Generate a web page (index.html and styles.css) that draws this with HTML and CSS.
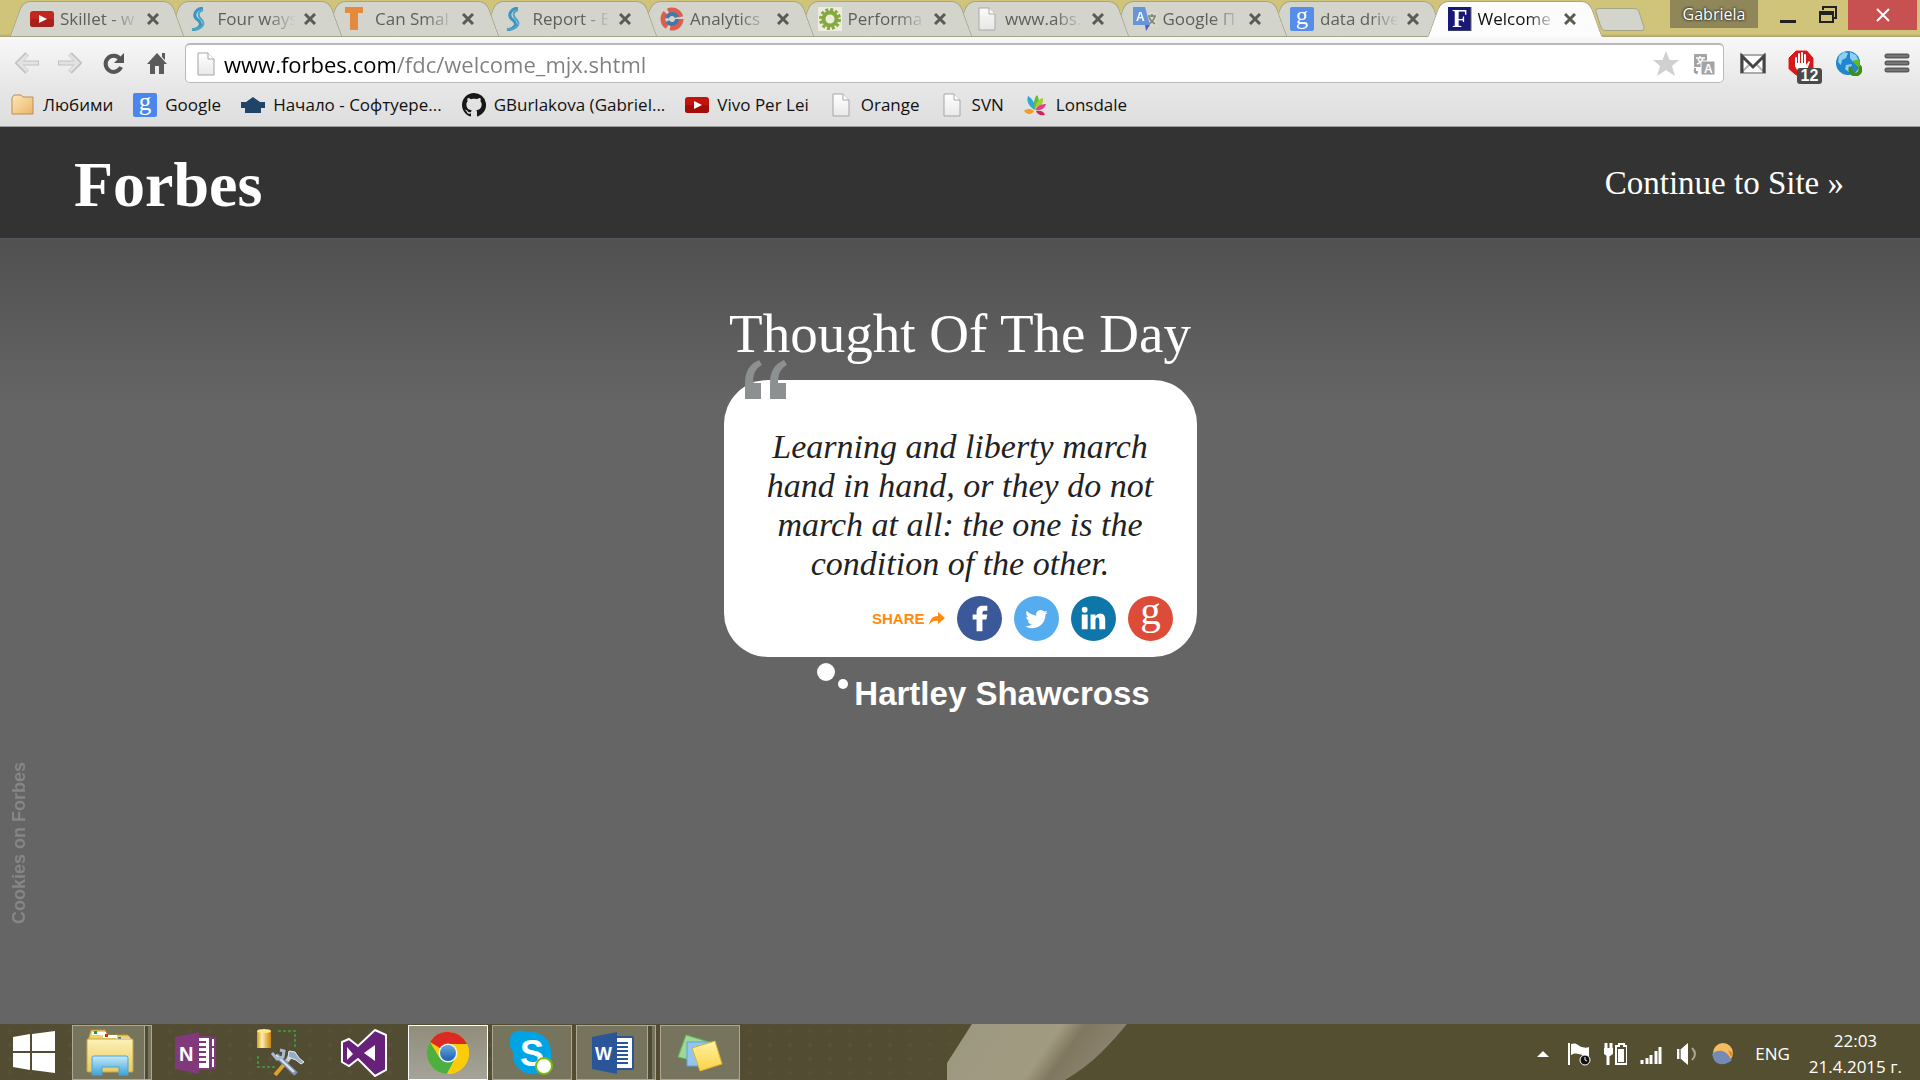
FILE: index.html
```html
<!DOCTYPE html>
<html lang="en">
<head>
<meta charset="utf-8">
<title>Welcome</title>
<link rel="stylesheet" href="styles.css">
</head>
<body>
<svg class="defs" aria-hidden="true">
  <defs>
    <linearGradient id="paper" x1="0" y1="0" x2="0" y2="1"><stop offset="0" stop-color="#fff"/><stop offset="1" stop-color="#e9e9e9"/></linearGradient>
    <linearGradient id="folder" x1="0" y1="0" x2="1" y2="1"><stop offset="0" stop-color="#fde8bd"/><stop offset="1" stop-color="#eab566"/></linearGradient>
    <linearGradient id="files" x1="0" y1="0" x2="0" y2="1"><stop offset="0" stop-color="#fdf1b5"/><stop offset="1" stop-color="#e9ca62"/></linearGradient>
    <linearGradient id="tray" x1="0" y1="0" x2="0" y2="1"><stop offset="0" stop-color="#c5eafa"/><stop offset="1" stop-color="#3fa4d8"/></linearGradient>
    <linearGradient id="gold" x1="0" y1="0" x2="1" y2="0"><stop offset="0" stop-color="#d99a1b"/><stop offset=".35" stop-color="#fff0b0"/><stop offset="1" stop-color="#c98208"/></linearGradient>
    <linearGradient id="note" x1="0" y1="0" x2="0" y2="1"><stop offset="0" stop-color="#fff2a0"/><stop offset="1" stop-color="#fbd24a"/></linearGradient>
    <linearGradient id="petal" gradientUnits="userSpaceOnUse" x1="30" y1="0" x2="128" y2="70"><stop offset="0" stop-color="#9d9880"/><stop offset=".58" stop-color="#a19b81"/><stop offset=".74" stop-color="#7f775f"/><stop offset="1" stop-color="#8a826d"/></linearGradient>
    <linearGradient id="blueball" x1="0" y1="0" x2="0" y2="1"><stop offset="0" stop-color="#6aa5e0"/><stop offset="1" stop-color="#1c62b0"/></linearGradient>
    <symbol id="i-close" viewBox="0 0 12 12"><path d="M1 1l10 10M11 1L1 11" stroke="currentColor" stroke-width="3"/></symbol>
    <symbol id="i-youtube" viewBox="0 0 24 24"><rect y="4" width="24" height="16" rx="3" fill="#c2130d"/><rect y="12" width="24" height="8" rx="3" fill="#a30d08"/><path d="M9 8l8 4-8 4z" fill="#fff"/></symbol>
    <symbol id="i-s" viewBox="0 0 24 24"><path d="M15 1C7 2 4 9 10 13c5 4 2 9-6 10" fill="none" stroke="#2f8fbf" stroke-width="3"/><path d="M15 3C9 5 10 9 13 12c6 5 0 11-9 10" fill="none" stroke="#3aa0cc" stroke-width="2"/></symbol>
    <symbol id="i-t" viewBox="0 0 24 24"><path d="M0 0h18v6h-5v17H5V6H0z" fill="#e8832e"/></symbol>
    <symbol id="i-ring" viewBox="0 0 24 24"><circle cx="12" cy="12" r="9" fill="none" stroke="#dd5240" stroke-width="5" stroke-dasharray="16 3"/><circle cx="12" cy="12" r="5" fill="none" stroke="#346fa6" stroke-width="4" stroke-dasharray="13 3"/></symbol>
    <symbol id="i-gear" viewBox="0 0 24 24"><path d="M0 0h24v24H0z" fill="#f1f0e0"/><circle cx="12" cy="12" r="9.500" fill="none" stroke="#7ba531" stroke-width="3" stroke-dasharray="3 1.970"/><circle cx="12" cy="12" r="6.500" fill="none" stroke="#7ba531" stroke-width="4"/></symbol>
    <symbol id="i-page" viewBox="0 0 24 24"><path d="M4 1h10l6 6v16H4z" fill="url(#paper)" stroke="#a5a5a5"/><path d="M14 1v6h6" fill="#fff" stroke="#a5a5a5"/></symbol>
    <symbol id="i-translate" viewBox="0 0 24 24"><path d="M12 5h12v15H12z" fill="#dcd8cc"/><path d="M15 9h8M19 7v3M16 17c3-2 5-4 6-8M16 10c1 3 3 5 6 7" fill="none" stroke="#73806f" stroke-width="1.500"/><path d="M0 0h12l5 18H0z" fill="#5b8fdc"/><path d="M12 18h5l-4 6z" fill="#4556b0"/><text x="3" y="14" class="glyph" font-size="12" fill="#fff">A</text></symbol>
    <symbol id="i-google" viewBox="0 0 24 24"><rect width="24" height="24" rx="2" fill="#4a86ee"/><text x="12" y="17" text-anchor="middle" class="glyph-serif" font-size="25" fill="#fff">g</text></symbol>
    <symbol id="i-forbes" viewBox="0 0 24 24"><path d="M0 0h23v24H0z" fill="#00006b"/><path d="M0 24h23V0" fill="none" stroke="#555"/><text x="12" y="20" text-anchor="middle" class="glyph-serif-bold" font-size="25" fill="#fff">F</text></symbol>
  </defs>
</svg>

<header class="browser">
  <div class="strip">
    <div class="tabs" role="tablist">
      <div class="tab"><svg class="icon"><use href="#i-youtube"/></svg><button class="tab-title" role="tab">Skillet - w</button><button class="tab-close" aria-label="Close"><svg><use href="#i-close"/></svg></button></div>
      <div class="tab"><svg class="icon"><use href="#i-s"/></svg><button class="tab-title" role="tab">Four ways</button><button class="tab-close" aria-label="Close"><svg><use href="#i-close"/></svg></button></div>
      <div class="tab"><svg class="icon"><use href="#i-t"/></svg><button class="tab-title" role="tab">Can Smal</button><button class="tab-close" aria-label="Close"><svg><use href="#i-close"/></svg></button></div>
      <div class="tab"><svg class="icon"><use href="#i-s"/></svg><button class="tab-title" role="tab">Report - E</button><button class="tab-close" aria-label="Close"><svg><use href="#i-close"/></svg></button></div>
      <div class="tab"><svg class="icon"><use href="#i-ring"/></svg><button class="tab-title" role="tab">Analytics</button><button class="tab-close" aria-label="Close"><svg><use href="#i-close"/></svg></button></div>
      <div class="tab"><svg class="icon"><use href="#i-gear"/></svg><button class="tab-title" role="tab">Performa</button><button class="tab-close" aria-label="Close"><svg><use href="#i-close"/></svg></button></div>
      <div class="tab"><svg class="icon"><use href="#i-page"/></svg><button class="tab-title" role="tab">www.abs.</button><button class="tab-close" aria-label="Close"><svg><use href="#i-close"/></svg></button></div>
      <div class="tab"><svg class="icon"><use href="#i-translate"/></svg><button class="tab-title" role="tab">Google П</button><button class="tab-close" aria-label="Close"><svg><use href="#i-close"/></svg></button></div>
      <div class="tab"><svg class="icon"><use href="#i-google"/></svg><button class="tab-title" role="tab">data drive</button><button class="tab-close" aria-label="Close"><svg><use href="#i-close"/></svg></button></div>
      <div class="tab active"><svg class="icon"><use href="#i-forbes"/></svg><button class="tab-title" role="tab" aria-selected="true">Welcome</button><button class="tab-close" aria-label="Close"><svg><use href="#i-close"/></svg></button></div>
    </div>
    <button class="new-tab" aria-label="New tab"></button>
    <div class="window-controls">
      <button class="profile">Gabriela</button>
      <button class="win" aria-label="Minimize"><svg viewBox="0 0 18 18" width="18" height="18"><path d="M1 14h16v3H1z" fill="#222"/></svg></button>
      <button class="win" aria-label="Restore"><svg viewBox="0 0 18 18" width="18" height="18"><path d="M4 4V1h13v11h-2" fill="none" stroke="#222" stroke-width="2"/><path d="M1 6h13v10H1z" fill="none" stroke="#222" stroke-width="2"/><path d="M0 5h15v4H0z" fill="#222"/></svg></button>
      <button class="win-close" aria-label="Close window"><svg viewBox="0 0 14 14" width="14" height="14"><path d="M1 1l12 12M13 1L1 13" stroke="#fff" stroke-width="2"/></svg></button>
    </div>
  </div>

  <div class="toolbar">
    <nav class="nav">
      <button aria-label="Back"><svg viewBox="0 0 24 24"><path d="M12 3l-9 9 9 9M4 12h20" fill="none" stroke="#c2c2c2" stroke-width="5"/><path d="M12 4l-8 8 8 8M4 12h19" fill="none" stroke="#e2e2e2" stroke-width="3"/></svg></button>
      <button aria-label="Forward"><svg viewBox="0 0 24 24"><path d="M12 3l9 9-9 9M20 12H0" fill="none" stroke="#c2c2c2" stroke-width="5"/><path d="M12 4l8 8-8 8M20 12H1" fill="none" stroke="#e2e2e2" stroke-width="3"/></svg></button>
      <button aria-label="Reload"><svg viewBox="0 0 24 24"><path d="M20 16a8 8 0 1 1-1-8" fill="none" stroke="#555" stroke-width="4"/><path d="M23 2v10H13z" fill="#555"/></svg></button>
      <button aria-label="Home"><svg viewBox="0 0 24 24"><path d="M13 2l10 11h-3v10h-5v-8h-4v8H6V13H3zM18 2h3v7l-3-3z" fill="#5a5a5a"/></svg></button>
    </nav>
    <form class="omnibox">
      <svg class="icon"><use href="#i-page"/></svg>
      <input class="url" type="text" aria-label="Address" value="www.forbes.com/fdc/welcome_mjx.shtml">
      <button type="button" aria-label="Bookmark"><svg viewBox="0 0 26 26"><path d="M13 0l3.500 9H26l-7 6 3 10-9-6-9 6 3-10-7-6h9.500z" fill="#d0d0d0"/></svg></button>
      <button type="button" aria-label="Translate"><svg viewBox="0 0 26 26"><rect x="3" y="3" width="13" height="13" rx="1" fill="#a3a3a3"/><path d="M5 7h9M9 5v2M6 13c3-1 5-3 6-6M7 8c1 3 3 4 6 5" fill="none" stroke="#fff" stroke-width="1.500"/><rect x="10" y="10" width="14" height="14" rx="1" fill="#a3a3a3" stroke="#fff"/><text x="13" y="22" class="glyph" font-size="12" fill="#fff">A</text><path d="M4 17v4h3M3 19l3 4" fill="none" stroke="#a3a3a3" stroke-width="2"/></svg></button>
    </form>
    <div class="extensions">
      <button aria-label="Mail"><svg viewBox="0 0 26 26"><path d="M1 5h24v18H1z" fill="#fff" stroke="#aaa" stroke-width="2"/><path d="M1 23l9-9M25 23l-9-9" stroke="#b5b5b5" stroke-width="2"/><path d="M2 23V6l11 11L24 6v17" fill="none" stroke="#454545" stroke-width="3"/></svg></button>
      <button aria-label="Ad blocker"><svg viewBox="0 0 26 26"><path d="M8 0h11l7 8v11l-7 7H8l-8-7V8z" fill="#d8181b" stroke="#fff"/><path d="M8 16V8M11 15V4M14 15V3M17 15V5" stroke="#fff" stroke-width="2" stroke-linecap="round"/><path d="M7 13h11v2l3-4 1 1-4 10H10l-3-6z" fill="#fff"/></svg><span class="badge">12</span></button>
      <button aria-label="Web"><svg viewBox="0 0 26 26"><circle cx="12" cy="13" r="12" fill="#1f86cf"/><path d="M3 6l5-4 4 1-2 5-4 2-1 5-3-3zM14 2l6 3 3 6-6 1-3-4zM10 15l6-1-3 8-4-3z" fill="#8fd0f2"/><path d="M15 17a5 5 0 1 0 8-1" fill="none" stroke="#3f8f10" stroke-width="4"/><path d="M16 11l8-2-1 9z" fill="#67b81f"/></svg></button>
      <button aria-label="Menu"><svg viewBox="0 0 26 26"><path d="M3 6h20M3 13h20M3 20h20" stroke="#5b5b5b" stroke-width="5" stroke-linecap="round"/><path d="M3 6h20M3 13h20M3 20h20" stroke="#777" stroke-width="2" stroke-linecap="round"/></svg></button>
    </div>
  </div>

  <nav class="bookmarks">
    <a href="#"><svg class="icon"><path d="M1 21V5l2-3h7l2 2h10v17z" fill="url(#folder)" stroke="#ba8f58"/></svg>Любими</a>
    <a href="#"><svg class="icon"><use href="#i-google"/></svg>Google</a>
    <a href="#"><svg class="icon"><path d="M12 4l7 5h5v6h-4v5H4v-5H0V9h5z" fill="#1f4467"/></svg>Начало - Софтуере...</a>
    <a href="#"><svg class="icon" viewBox="0 0 16 16"><path fill="#181717" d="M8 0C3.580 0 0 3.580 0 8c0 3.540 2.290 6.530 5.470 7.590.4.070.55-.17.55-.38 0-.19-.01-.82-.01-1.490-2.010.37-2.530-.49-2.690-.94-.09-.23-.48-.94-.82-1.130-.28-.15-.68-.52-.01-.53.63-.01 1.080.58 1.230.82.72 1.210 1.870.87 2.330.66.07-.52.28-.87.51-1.070-1.780-.2-3.640-.89-3.640-3.950 0-.87.31-1.590.82-2.150-.08-.2-.36-1.020.08-2.120 0 0 .67-.21 2.200.82.64-.18 1.320-.27 2-.27s1.360.09 2 .27c1.530-1.040 2.200-.82 2.200-.82.44 1.100.16 1.920.08 2.120.51.56.82 1.270.82 2.150 0 3.070-1.870 3.750-3.650 3.950.29.25.54.73.54 1.480 0 1.070-.01 1.930-.01 2.200 0 .21.15.46.55.38A8 8 0 0 0 8 0z"/></svg>GBurlakova (Gabriel...</a>
    <a href="#"><svg class="icon"><use href="#i-youtube"/></svg>Vivo Per Lei</a>
    <a href="#"><svg class="icon"><use href="#i-page"/></svg>Orange</a>
    <a href="#"><svg class="icon"><use href="#i-page"/></svg>SVN</a>
    <a href="#"><svg class="icon"><path d="M11 17C5 14 2 8 4 3c5 3 8 9 7 14z" fill="#2fa7d8"/><path d="M11 17c-2-6-1-12 2-15 3 4 2 11-2 15z" fill="#5fbf3a"/><path d="M11 17c0-6 3-11 8-12 1 5-3 10-8 12z" fill="#a4ce39"/><path d="M12 17c1-4 5-6 10-6-1 4-5 7-10 6z" fill="#e23f8e"/><path d="M10 18c-4-3-8-2-10 0 3 4 8 4 10 0z" fill="#f59a23"/><path d="M12 18c4-1 8 0 9 4-5 1-8-1-9-4z" fill="#cf2260"/></svg>Lonsdale</a>
  </nav>
</header>

<div class="page">
  <header class="site-header">
    <a class="logo" href="#">Forbes</a>
    <a class="continue" href="#">Continue to Site »</a>
  </header>
  <main class="content">
    <h1>Thought Of The Day</h1>
    <article class="card">
      <svg class="quote-mark" viewBox="0 0 42 40" width="42" height="40" aria-hidden="true"><path d="M0 39V23C0 11 5 4 14 0l3 5c-6 3-9 8-9 18h8v16zM25 39V23C25 11 30 4 39 0l3 5c-6 3-9 8-9 18h8v16z" fill="#8c9090"/></svg>
      <blockquote>Learning and liberty march hand in hand, or they do not march at all: the one is the condition of the other.</blockquote>
      <div class="share">
        <span class="share-label">SHARE</span>
        <svg class="share-arrow" viewBox="0 0 16 14" width="16" height="14"><path d="M9 0l7 6-7 6V9C5 8 2 10 0 13c1-6 4-9 9-9z" fill="#ff8a0d"/></svg>
        <a class="social facebook" href="#" aria-label="Facebook"><svg viewBox="0 0 46 46"><path d="M20 36V24h-4v-5h4v-3c0-4 3-6 6-6h5v5h-3c-1 0-2 1-2 2v2h5l-1 5h-4v12z" fill="#fff"/></svg></a>
        <a class="social twitter" href="#" aria-label="Twitter"><svg viewBox="0 0 46 46"><path d="M34.500 16.500c-.8.400-1.700.6-2.700.8 1-.6 1.700-1.500 2-2.600-.9.500-1.900.9-3 1.100a4.700 4.700 0 0 0-8 4.300c-3.900-.2-7.400-2.100-9.700-4.900-1.300 2.200-.6 4.900 1.500 6.300-.8 0-1.500-.2-2.100-.6 0 2.300 1.600 4.200 3.700 4.700-.7.200-1.400.2-2.100.1.600 1.900 2.300 3.200 4.400 3.200a9.500 9.500 0 0 1-7 2c2.100 1.300 4.600 2.100 7.200 2.100 8.800 0 13.700-7.400 13.400-14 1-.7 1.800-1.500 2.400-2.500z" fill="#fff"/></svg></a>
        <a class="social linkedin" href="#" aria-label="LinkedIn"><svg viewBox="0 0 46 46"><circle cx="14" cy="14" r="3" fill="#fff"/><path d="M11 19h6v15h-6zM20 19h5v2c1-2 3-3 5-3 4 0 5 3 5 7v9h-6v-8c0-3-1-4-2-4-2 0-2 2-2 4v8h-5z" fill="#fff"/></svg></a>
        <a class="social google" href="#" aria-label="Google"><svg viewBox="0 0 46 46"><text x="23" y="29" text-anchor="middle" class="glyph-serif" font-size="42" fill="#fff">g</text></svg></a>
      </div>
    </article>
    <p class="author">
      <svg viewBox="0 0 32 28" width="32" height="28" aria-hidden="true"><circle cx="10" cy="9" r="9" fill="#fff"/><circle cx="27" cy="21" r="5" fill="#fff"/></svg>
      <span>Hartley Shawcross</span>
    </p>
  </main>
  <a class="cookies" href="#">Cookies on Forbes</a>
</div>

<footer class="taskbar">
  <svg class="wallpaper" viewBox="0 0 180 56" width="180" height="56" aria-hidden="true"><path d="M25 0L0 39v17h118c28-16 45-36 62-56z" fill="url(#petal)"/></svg>
  <button class="start" aria-label="Start"><svg viewBox="0 0 42 42" width="42" height="42"><path d="M0 6l17-3v17H0zM19 3l23-3v20H19zM0 22h17v17L0 36zM19 22h23v20l-23-3z" fill="#fff"/></svg></button>
  <button class="task open stack" aria-label="File Explorer"><svg viewBox="0 0 48 48" width="48" height="48"><path d="M3 8l2-7h14l3 5h20l3 3v6H2z" fill="#efd26a" stroke="#b4922f"/><path d="M6 3h14v3H6zM17 6h14v3H17zM30 9h14v3H30z" fill="#fff"/><path d="M8 2h3v3H8z" fill="#1f9c3c"/><path d="M19 5h3v3h-3z" fill="#d42e12"/><path d="M32 8h3v3h-3z" fill="#1e86c8"/><rect x="1" y="10" width="46" height="33" rx="1" fill="url(#files)" stroke="#c5a648"/><path d="M6 29q0-2 2-2h32q2 0 2 2v17h-9v-8H16v8H6z" fill="url(#tray)" stroke="#4ba5cf"/></svg></button>
  <button class="task" aria-label="OneNote"><svg viewBox="0 0 44 42" width="44" height="42"><path d="M22 5h14v32H22z" fill="#fff" stroke="#80397b" stroke-width="2"/><path d="M37 6h4v30h-4z" fill="#fff" stroke="#80397b" stroke-width="2"/><path d="M25 10h7M25 15h7M25 20h7M25 25h7M25 30h7M37 15h5M37 26h5" stroke="#80397b" stroke-width="2"/><path d="M1 5l24-5v42L1 37z" fill="#80397b"/><text x="5" y="29" class="glyph" font-size="20" fill="#fff">N</text></svg></button>
  <button class="task" aria-label="Database tools"><svg viewBox="0 0 48 48" width="48" height="48"><path d="M1 2h14v17H1z" fill="url(#gold)"/><ellipse cx="8" cy="2" rx="7" ry="2" fill="#ffe48b"/><path d="M22 2h17v18M2 27v11h17" fill="none" stroke="#3f8e3c" stroke-width="2" stroke-dasharray="3 2"/><path d="M19 46l12-14" stroke="#dda32b" stroke-width="4"/><path d="M31 32l5-7" stroke="#c8d0dd" stroke-width="4"/><path d="M20 26l20 19" stroke="#7e93b5" stroke-width="5"/><path d="M20 26l18 17" stroke="#dde6f3" stroke-width="2"/><path d="M16 24l5 6 6-2 1-6-4-1" fill="none" stroke="#a9b9d0" stroke-width="3"/><path d="M33 22l6 1 4 6 5 4-3 2-5-4-8-3z" fill="#9aabc5" stroke="#e4ebf4"/></svg></button>
  <button class="task" aria-label="Visual Studio"><svg viewBox="0 0 48 48" width="48" height="48"><path d="M35 1l11 5v35l-11 6-17-17-9 7-7-4V13l7-3 9 7z" fill="#68217a" stroke="#fff" stroke-width="2"/><path d="M7 18v13l6-6zM35 16v16l-11-8z" fill="#fff"/></svg></button>
  <button class="task open current" aria-label="Chrome"><svg viewBox="0 0 44 44" width="44" height="44"><circle cx="22" cy="22" r="21" fill="#fccb09"/><path d="M22 22L4 11a21 21 0 0 1 37 2H22z" fill="#dc2a23"/><path d="M4 11a21 21 0 0 0 17 32l9-17-8-4-9 4z" fill="#4caf3f"/><path d="M22 13h19a21 21 0 0 1-20 30l9-17z" fill="#fccb09"/><circle cx="22" cy="22" r="9.500" fill="#f3f3f3"/><circle cx="22" cy="22" r="8" fill="url(#blueball)"/></svg></button>
  <button class="task open" aria-label="Skype"><svg viewBox="0 0 48 46" width="48" height="46"><path d="M3 5C7 0 14 0 18 2c16-2 27 9 25 25 4 8-2 18-12 17C15 46 4 37 5 22 1 17 1 10 3 5z" fill="#00a4e4"/><text x="24" y="36" text-anchor="middle" class="glyph" font-size="36" fill="#fff">S</text><circle cx="36" cy="36" r="8" fill="#fff" stroke="#7fba00" stroke-width="2"/></svg></button>
  <button class="task open stack stack-deep" aria-label="Word"><svg viewBox="0 0 44 42" width="44" height="42"><rect x="22" y="5" width="20" height="32" rx="1" fill="#fff" stroke="#2a5699" stroke-width="2"/><path d="M24 11h13M24 15h13M24 19h13M24 23h13M24 27h13M24 31h13" stroke="#2a5699" stroke-width="2"/><path d="M1 5l25-5v42L1 37z" fill="#2a5699"/><text x="4" y="28" class="glyph" font-size="18" fill="#fff">W</text></svg></button>
  <button class="task open" aria-label="Sticky Notes"><svg viewBox="0 0 46 38" width="46" height="38"><path d="M9 1l23 7-7 21-24-6z" fill="#9fd796" stroke="#5fb45a"/><path d="M10 8h24v24H10z" fill="#93c5f2" stroke="#5e9fdc"/><path d="M15 14l23-7 7 23-22 7z" fill="url(#note)" stroke="#d9b22f"/></svg></button>

  <div class="system-tray">
    <button aria-label="Show hidden icons"><svg viewBox="0 0 24 24"><path d="M12 9l6 6H6z" fill="#fff"/></svg></button>
    <button aria-label="Action Center"><svg viewBox="0 0 24 24"><path d="M2 1v22" stroke="#fff" stroke-width="2"/><path d="M4 2c6-2 7 2 11 3 3 1 5 1 7 0v9c-5 1-8-2-11-2-3-1-5 0-7 1z" fill="#fff"/><circle cx="18" cy="18" r="5" fill="#111" stroke="#fff" stroke-width="1"/><path d="M18 15v3l2 1" fill="none" stroke="#fff"/></svg></button>
    <button aria-label="Battery"><svg viewBox="0 0 24 24"><path d="M3 1v5M8 1v5M5 13v10" stroke="#fff" stroke-width="3"/><path d="M1 6h9v6l-3 2H4l-3-2z" fill="#fff"/><path d="M13 4h3V2h5v2h3v18H13z" fill="none" stroke="#fff" stroke-width="2"/><path d="M15 7h6v13h-6z" fill="#fff"/></svg></button>
    <button aria-label="Network"><svg viewBox="0 0 24 24"><path d="M3 22v-4M8 22v-6M12 22V13M17 22V9M21 22V5" stroke="#fff" stroke-width="3"/></svg></button>
    <button aria-label="Volume"><svg viewBox="0 0 24 24"><path d="M2 7h4l7-6v22l-7-6H2z" fill="#fff"/><path d="M5 7v10" stroke="#8f8f8f" stroke-width="2"/><path d="M17 6c4 4 4 8 0 12" fill="none" stroke="#aaa795" stroke-width="2"/></svg></button>
    <button aria-label="Weather"><svg viewBox="0 0 24 24"><circle cx="12" cy="11" r="10" fill="#f5bd62"/><path d="M17 8l5 3-2 4z" fill="#e8861b"/><path d="M1 12c5-5 14-5 19 5l1 1c-6 6-17 6-19-3z" fill="#738bb5"/></svg></button>
    <button class="language">ENG</button>
    <time class="clock" datetime="2015-04-21T22:03"><span>22:03</span><span>21.4.2015 г.</span></time>
  </div>
</footer>
</body>
</html>
```
FILE: styles.css
```css
* { box-sizing: border-box; }

body {
  margin: 0;
  min-height: 100vh;
  display: flex;
  flex-direction: column;
  font: 17px/24px "Open Sans", "Noto Sans", sans-serif;
  color: #111;
  background: #656565;
}

button, input {
  margin: 0;
  padding: 0;
  border: 0;
  background: none;
  font: inherit;
  color: inherit;
}

a { color: inherit; text-decoration: none; }

.defs { position: absolute; width: 0; height: 0; }
.icon { width: 24px; height: 24px; flex: none; }
.glyph { font-family: "Liberation Sans", sans-serif; font-weight: bold; }
.glyph-serif { font-family: "Liberation Serif", serif; }
.glyph-serif-bold { font-family: "Liberation Serif", serif; font-weight: bold; }

/* Tab strip */
.strip {
  display: flex;
  height: 37px;
  padding-left: 8px;
  background: linear-gradient(#cfc47a 34px, #a8a06a);
}

.tabs { flex: 1; display: flex; min-width: 0; }

.tab {
  position: relative;
  flex: 1 1 0;
  min-width: 0;
  display: flex;
  align-items: center;
  padding: 0 7px 0 22px;
  color: #605f55;
  isolation: isolate;
}

.tab::before, .tab::after {
  content: "";
  position: absolute;
  z-index: -1;
  top: 1px;
  bottom: 0;
  background: #d3d4cb;
  border: 1px solid #a5a486;
}

.tab::before {
  left: 8px;
  right: 50%;
  border-right: 0;
  border-radius: 8px 0 0 0;
  transform: skewX(-20deg);
}

.tab::after {
  left: 40%;
  right: -12px;
  border-left: 0;
  border-radius: 0 8px 0 0;
  transform: skewX(20deg);
}

.tab:nth-child(1) { z-index: 9; }
.tab:nth-child(2) { z-index: 8; }
.tab:nth-child(3) { z-index: 7; }
.tab:nth-child(4) { z-index: 6; }
.tab:nth-child(5) { z-index: 5; }
.tab:nth-child(6) { z-index: 4; }
.tab:nth-child(7) { z-index: 3; }
.tab:nth-child(8) { z-index: 2; }
.tab:nth-child(9) { z-index: 1; }
.tab.active { z-index: 10; color: #111; }
.tab.active::before, .tab.active::after { background: #fcfcfc; border-bottom-color: #fcfcfc; }
.tab .icon { opacity: 0.9; }

.tab-title {
  flex: 1;
  min-width: 0;
  margin-left: 6px;
  overflow: hidden;
  white-space: nowrap;
  text-align: left;
  -webkit-mask-image: linear-gradient(90deg, #000 60%, transparent 95%);
  mask-image: linear-gradient(90deg, #000 60%, transparent 95%);
}

.tab-close { flex: none; display: flex; margin-left: 4px; color: #5c5b50; }
.tab-close svg { width: 12px; height: 12px; }

.new-tab {
  width: 44px;
  height: 23px;
  margin: 8px 0 0 15px;
  background: #d3d4cb;
  border: 1px solid #a5a486;
  border-radius: 4px;
  transform: skewX(18deg);
}

.window-controls { display: flex; align-items: flex-start; margin-left: 28px; padding-right: 3px; }

.profile {
  width: 88px;
  height: 28px;
  margin-right: 10px;
  background: #8f8659;
  color: #fff;
  font-size: 16px;
  text-shadow: 0 0 3px #222, 0 0 2px #222;
}

.win { width: 40px; height: 30px; display: grid; place-items: center; }
.win-close { width: 69px; height: 30px; display: grid; place-items: center; background: #c75050; }

/* Toolbar */
.toolbar {
  display: flex;
  align-items: center;
  height: 52px;
  padding-right: 10px;
  background: linear-gradient(#f8f8f8, #e6e6e6);
}

.nav { display: flex; width: 185px; padding-left: 15px; gap: 19px; }
.nav button, .nav svg { display: block; width: 24px; height: 24px; }

.omnibox {
  flex: 1;
  display: flex;
  align-items: center;
  height: 40px;
  margin: 0;
  padding: 0 6px 0 8px;
  gap: 12px;
  background: #fff;
  border: 1px solid #b9b9b9;
  border-top-width: 2px;
  border-radius: 5px;
}

.omnibox .icon { margin-right: -6px; }
.omnibox button, .omnibox button svg { display: block; width: 26px; height: 26px; }

.url {
  flex: 1;
  min-width: 0;
  height: 32px;
  font-size: 22px;
  outline: 0;
  background: linear-gradient(90deg, #000 171px, #808080 171px);
  -webkit-background-clip: text;
  background-clip: text;
  -webkit-text-fill-color: transparent;
}

.extensions { display: flex; gap: 22px; margin-left: 16px; }
.extensions button { position: relative; display: block; width: 26px; height: 26px; }
.extensions button svg { display: block; width: 26px; height: 26px; }

.badge {
  position: absolute;
  left: 9px;
  top: 18px;
  width: 25px;
  border-radius: 3px;
  background: #4a4a4a;
  color: #fff;
  font: bold 16px/16px "Liberation Sans", sans-serif;
  text-align: center;
}

/* Bookmarks */
.bookmarks {
  display: flex;
  align-items: center;
  gap: 20px;
  height: 38px;
  padding: 0 11px 5px;
  background: linear-gradient(#e6e6e6, #dedede);
  border-bottom: 1px solid #9b9b9b;
}

.bookmarks a { display: flex; align-items: center; gap: 8px; white-space: nowrap; }

/* Site */
.page { position: relative; flex: 1; background: linear-gradient(#505050 111px, #656565 275px); }

.site-header {
  display: flex;
  justify-content: space-between;
  align-items: center;
  height: 112px;
  padding: 0 76px 0 74px;
  background: #333;
  border-bottom: 1px solid #58565c;
  color: #fff;
  font-family: "Liberation Serif", serif;
}

.logo { padding-top: 4px; font-size: 64px; line-height: 64px; font-weight: bold; }
.continue { font-size: 33px; line-height: 40px; }

.content { display: flex; flex-direction: column; align-items: center; padding: 63px 16px; }

h1 {
  margin: 0;
  color: #fff;
  font: 55px/64px "Liberation Serif", serif;
}

.card {
  position: relative;
  width: 100%;
  max-width: 473px;
  margin-top: 14px;
  padding: 47px 24px 16px;
  background: #fff;
  border-radius: 44px;
}

.quote-mark { position: absolute; left: 21px; top: -20px; }

blockquote {
  margin: 0 auto;
  max-width: 400px;
  color: #222;
  text-align: center;
  font: italic 34px/39px "Liberation Serif", serif;
}

.share { display: flex; justify-content: flex-end; align-items: center; gap: 12px; margin-top: 13px; }
.share-label { margin-right: -8px; color: #ff8a0d; font: bold 15px/20px "Liberation Sans", sans-serif; }
.social { width: 45px; height: 45px; border-radius: 50%; }
.social svg { display: block; width: 45px; height: 45px; }
.facebook { background: #3b5998; }
.twitter { background: #55acee; }
.linkedin { background: #0e76a8; }
.google { background: #dd4b39; }

.author {
  display: flex;
  align-items: flex-start;
  gap: 6px;
  margin: 6px 0 0;
  padding-left: 46px;
  color: #fff;
  font: bold 33px/40px "Liberation Sans", sans-serif;
}

.author span { padding-top: 11px; }

.cookies {
  position: absolute;
  left: 8px;
  bottom: 100px;
  writing-mode: vertical-rl;
  transform: rotate(180deg);
  color: #868686;
  font: bold 18px/22px "Liberation Sans", sans-serif;
}

/* Taskbar */
.taskbar {
  position: relative;
  display: flex;
  gap: 4px;
  height: 56px;
  padding-right: 18px;
  background:
    linear-gradient(90deg, transparent 900px, #544f31 1000px),
    radial-gradient(circle, #585239 1px, transparent 3px) 0 0 / 20px 14px,
    #524c33;
  color: #fff;
}

.wallpaper { position: absolute; left: 947px; top: 0; }

.start, .task { display: grid; place-items: center; height: 55px; }
.start { width: 68px; }
.task { position: relative; width: 80px; border: 1px solid transparent; margin-top: 1px; }
.task.open { background: #77745e; border-color: #aba995; }
.task.current { background: linear-gradient(#908d7c, #a5a398); border: 1px solid #fff; }
.task.stack { padding-right: 5px; }
.task.stack::after { content: ""; position: absolute; right: 3px; top: 0; bottom: 0; width: 3px; background: #4e4a35; border-left: 1px solid #aba995; }
.task.stack-deep { padding-right: 7px; }
.task.stack-deep::after { width: 4px; }

.system-tray { display: flex; align-items: center; margin-left: auto; gap: 12px; padding-top: 3px; }
.system-tray button svg { display: block; width: 24px; height: 24px; }
.system-tray .language { margin: 0 7px 0 8px; }

.clock {
  display: flex;
  flex-direction: column;
  align-items: center;
  line-height: 26px;
}
```
